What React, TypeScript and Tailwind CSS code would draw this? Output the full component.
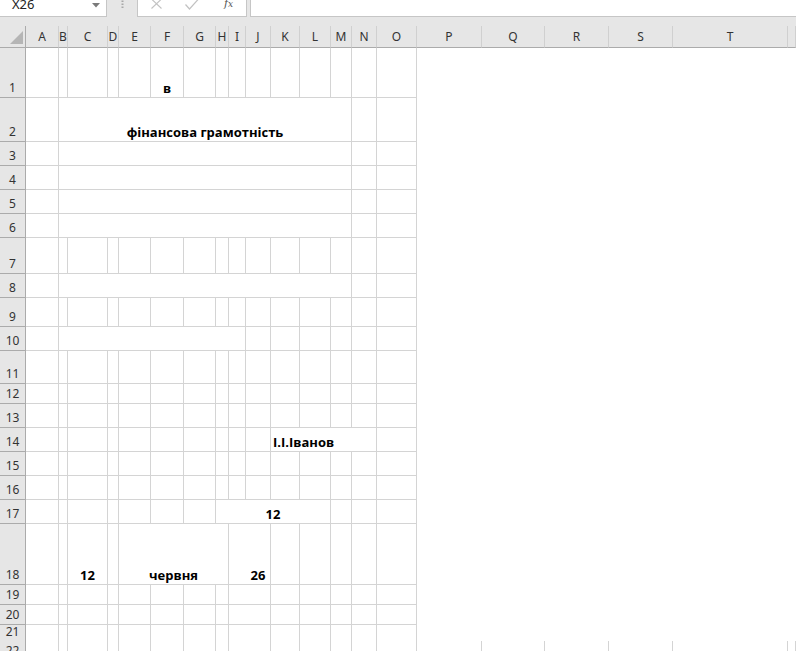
import React from "react";

type Seg = { span: number; text?: string; align?: "center" | "left"; noR?: boolean };

const GRID =
  "grid grid-cols-[26px_33px_9px_40px_11px_32px_33px_32px_13px_17px_25px_29px_31px_21px_25px_40px_65px_63px_64px_64px_115px_1fr]";

const SPAN: Record<number, string> = {
  1: "col-span-1",
  2: "col-span-2",
  3: "col-span-3",
  4: "col-span-4",
  5: "col-span-5",
  6: "col-span-6",
  7: "col-span-7",
  8: "col-span-8",
  9: "col-span-9",
  10: "col-span-10",
  11: "col-span-11",
  12: "col-span-12",
};

const s = (): Seg => ({ span: 1 });
const singles = (a: number, b: number): Seg[] => {
  const out: Seg[] = [];
  for (let i = a; i <= b; i++) out.push({ span: 1 });
  return out;
};

const mergedRow = (): Seg[] => [s(), { span: 12 }, s(), s()];
const lowRow = (): Seg[] => [...singles(1, 8), { span: 1, noR: true }, ...singles(10, 15)];

const rows: { n: number; h: string; segs: Seg[] }[] = [
  { n: 1, h: "h-[50px]", segs: [...singles(1, 5), { span: 1, text: "в" }, ...singles(7, 15)] },
  { n: 2, h: "h-[44px]", segs: [s(), { span: 12, text: "фінансова грамотність" }, s(), s()] },
  { n: 3, h: "h-[24px]", segs: mergedRow() },
  { n: 4, h: "h-[24px]", segs: mergedRow() },
  { n: 5, h: "h-[24px]", segs: mergedRow() },
  { n: 6, h: "h-[24px]", segs: mergedRow() },
  { n: 7, h: "h-[36px]", segs: singles(1, 15) },
  { n: 8, h: "h-[24px]", segs: mergedRow() },
  { n: 9, h: "h-[29px]", segs: singles(1, 15) },
  { n: 10, h: "h-[24px]", segs: [s(), { span: 8 }, ...singles(10, 15)] },
  { n: 11, h: "h-[33px]", segs: singles(1, 15) },
  { n: 12, h: "h-[20px]", segs: singles(1, 15) },
  { n: 13, h: "h-[24px]", segs: singles(1, 15) },
  { n: 14, h: "h-[24px]", segs: [...singles(1, 10), { span: 4, text: "І.І.Іванов", align: "left" }, s()] },
  { n: 15, h: "h-[24px]", segs: singles(1, 15) },
  { n: 16, h: "h-[24px]", segs: singles(1, 15) },
  { n: 17, h: "h-[24px]", segs: [...singles(1, 7), { span: 5, text: "12" }, ...singles(13, 15)] },
  {
    n: 18,
    h: "h-[61px]",
    segs: [
      s(),
      s(),
      { span: 1, text: "12" },
      s(),
      { span: 4, text: "червня" },
      { span: 1, noR: true },
      { span: 1, text: "26" },
      ...singles(11, 15),
    ],
  },
  { n: 19, h: "h-[20px]", segs: lowRow() },
  { n: 20, h: "h-[20px]", segs: lowRow() },
  { n: 21, h: "h-[16px]", segs: lowRow() },
];

const COLS = ["A", "B", "C", "D", "E", "F", "G", "H", "I", "J", "K", "L", "M", "N", "O", "P", "Q", "R", "S", "T", ""];

function Cell({ seg }: { seg: Seg }) {
  return (
    <div
      className={`${SPAN[seg.span]} flex items-end border-b border-[#d4d4d4] bg-white pb-[1px] ${
        seg.noR ? "" : "border-r"
      } ${seg.align === "left" ? "justify-start pl-[2px]" : "justify-center"}`}
    >
      {seg.text ? (
        <span className="whitespace-nowrap font-['Open_Sans',sans-serif] text-[13px] font-bold leading-[16px] text-black">
          {seg.text}
        </span>
      ) : null}
    </div>
  );
}

function RowHeader({ n }: { n: number | string }) {
  return (
    <div className="flex items-end justify-center border-r border-b border-[#ababab] bg-[#e6e6e6] pb-[2px] font-['Noto_Sans',sans-serif] text-[12px] leading-[14px] text-[#333]">
      {n}
    </div>
  );
}

export default function App() {
  return (
    <div className="h-[651px] w-full overflow-hidden bg-white">
      {/* formula bar */}
      <div className="flex h-[26px] bg-[#e6e6e6]">
        <div className="flex h-[17px] w-[107px] items-start border-r border-b border-[#c6c6c6] bg-white pl-[12px]">
          <span className="-mt-[2px] font-['Noto_Sans',sans-serif] text-[13px] leading-[13px] text-[#222]">X26</span>
          <svg className="ml-auto mr-[6px] mt-[3px]" width="8" height="5" viewBox="0 0 8 5">
            <path d="M0 0 L8 0 L4 4.5 Z" fill="#7a7a7a" />
          </svg>
        </div>
        <div className="flex w-[30px] justify-center">
          <svg width="3" height="10" viewBox="0 0 3 10">
            <rect x="0.5" y="0.5" width="2" height="1.5" fill="#a8a8a8" />
            <rect x="0.5" y="3.5" width="2" height="1.5" fill="#a8a8a8" />
            <rect x="0.5" y="6.5" width="2" height="1.5" fill="#a8a8a8" />
          </svg>
        </div>
        <div className="flex h-[17px] w-[110px] items-start border-x border-b border-[#c6c6c6] bg-white">
          <svg className="ml-[13px] -mt-[1px]" width="11" height="10" viewBox="0 0 11 10">
            <path d="M0.5 0 L10.5 9.5 M10.5 0 L0.5 9.5" stroke="#c2c2c2" strokeWidth="1.1" fill="none" />
          </svg>
          <svg className="ml-[23px] -mt-[1px]" width="14" height="11" viewBox="0 0 14 11">
            <path d="M0.5 5.5 L4.5 10 L13.5 0" stroke="#c2c2c2" strokeWidth="1.2" fill="none" />
          </svg>
          <span className="ml-[25px] -mt-[3px] font-['DejaVu_Serif',serif] text-[11px] italic leading-[14px] text-[#555]">
            f<span className="text-[9px]">x</span>
          </span>
        </div>
        <div className="ml-[3px] h-[17px] flex-1 border-l border-b border-[#c6c6c6] bg-white" />
      </div>

      {/* column header */}
      <div className={`${GRID} h-[22px]`}>
        <div className="relative border-r border-b border-[#ababab] bg-[#e6e6e6]">
          <svg className="absolute left-[10px] top-[5px]" width="13" height="13" viewBox="0 0 13 13">
            <path d="M13 0 L13 13 L0 13 Z" fill="#b5b5b5" />
          </svg>
        </div>
        {COLS.map((c, i) => (
          <div
            key={i}
            className="flex items-center justify-center border-r border-b border-r-[#d0d0d0] border-b-[#ababab] bg-[#e6e6e6] font-['Noto_Sans',sans-serif] text-[12px] leading-[14px] text-[#333]"
          >
            {c}
          </div>
        ))}
      </div>

      {/* rows */}
      {rows.map((r) => (
        <div key={r.n} className={`${GRID} ${r.h}`}>
          <RowHeader n={r.n} />
          {r.segs.map((seg, i) => (
            <Cell key={i} seg={seg} />
          ))}
          <div className="col-span-6 bg-white" />
        </div>
      ))}
      <div className={`${GRID} h-[20px]`}>
        <RowHeader n={22} />
        {[...singles(1, 8), { span: 1, noR: true }, ...singles(10, 21)].map((seg, i) => (
          <Cell key={i} seg={seg} />
        ))}
      </div>
    </div>
  );
}
